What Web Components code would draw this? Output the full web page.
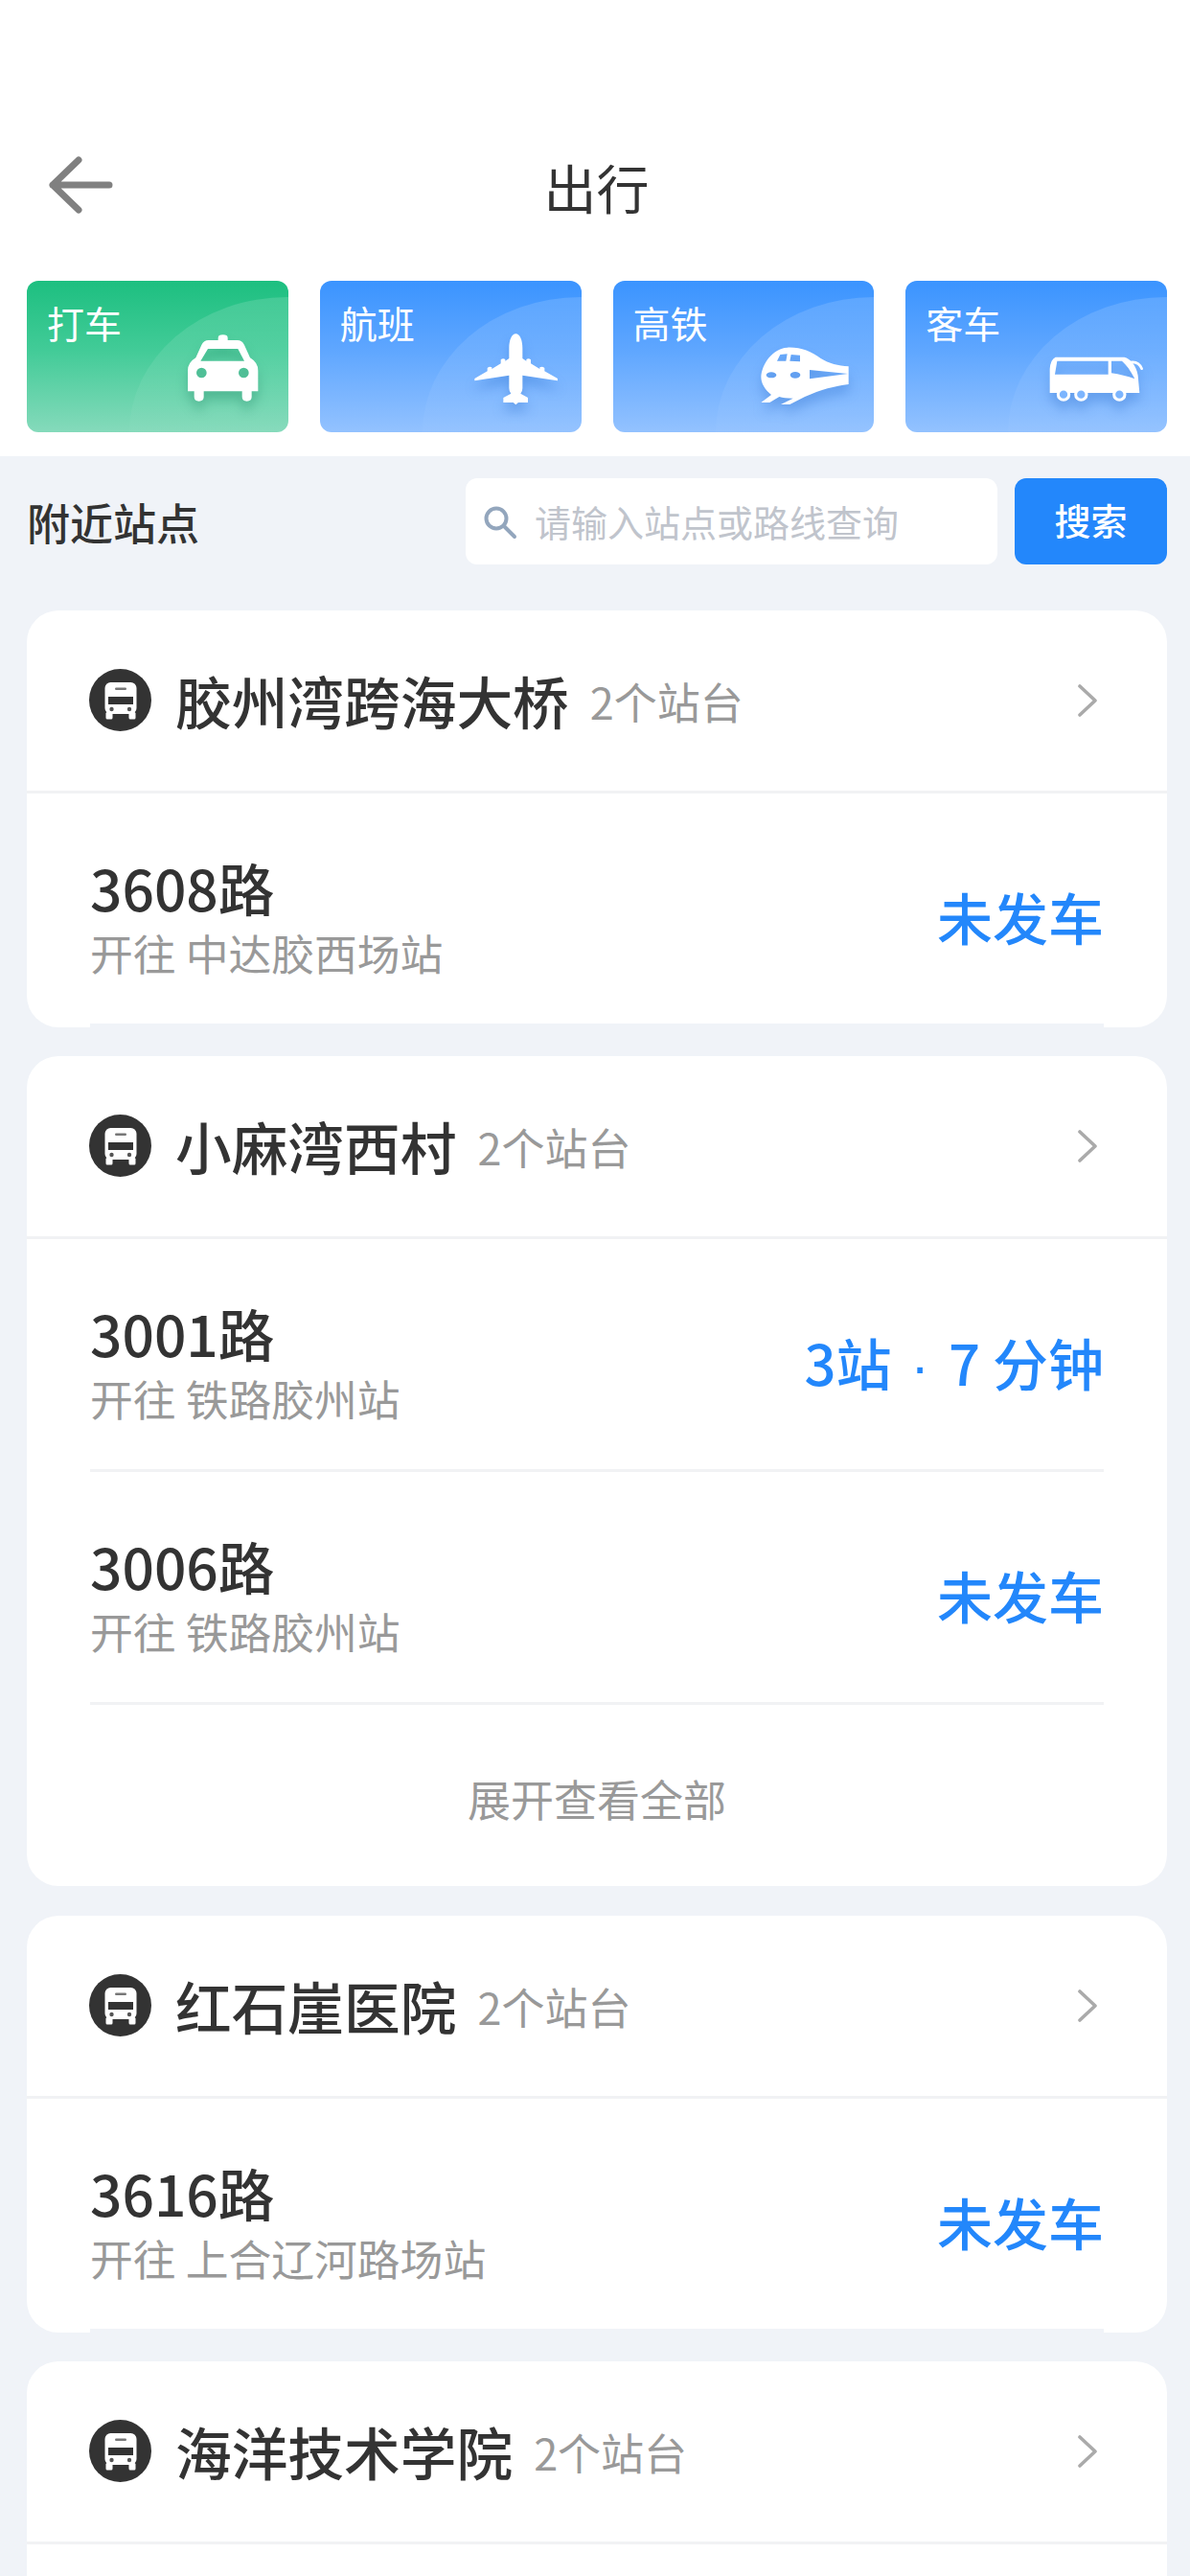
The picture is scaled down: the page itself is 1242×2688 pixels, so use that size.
<!DOCTYPE html>
<html lang="zh-CN">
<head>
<meta charset="utf-8">
<title>出行</title>
<style>
  html, body { margin: 0; padding: 0; }
  body { width: 1242px; height: 2688px; overflow: hidden; background: #f0f3f8;
    font-family: "Noto Sans CJK SC", "Noto Sans", sans-serif; color: #333; }
  travel-page { display: block; }
</style>
</head>
<body>
<travel-page>
  <nav-bar slot="head">出行</nav-bar>
  <mode-tile slot="modes" tone="green" label="打车" style="--ir:15px;--ib:16px">
    <svg width="105" height="95" viewBox="0 0 315 285" fill="#fff">
      <path fill-rule="evenodd" d="M140 45V38Q140 28 155 28Q170 28 170 38V45H200Q215 45 222 60L240 100Q265 115 265 140V205H245V222Q245 236 230 236Q215 236 215 222V205H95V222Q95 236 80 236Q65 236 65 222V205H45V140Q45 115 70 100L88 60Q95 45 110 45ZM108 72H202L222 110H85ZM72 147a16 16 0 1 0 32 0a16 16 0 1 0 -32 0ZM204 147a16 16 0 1 0 32 0a16 16 0 1 0 -32 0Z"/>
    </svg>
  </mode-tile>
  <mode-tile slot="modes" label="航班" style="--ir:16px;--ib:16px">
    <svg width="105" height="95" viewBox="0 0 315 285" fill="#fff">
      <path d="M157 25C170 25 178 45 178 70V102L190 110V105Q197 100 204 106V118L232 135V130Q240 126 247 132V142L288 165V172L178 155V195Q178 205 172 212L195 225V240H165L157 247L149 240H118V225L142 212Q136 205 136 195V155L28 172V165L68 142V132Q75 126 82 130V135L110 118V106Q117 100 124 105V110L136 102V70C136 45 144 25 157 25Z"/>
    </svg>
  </mode-tile>
  <mode-tile slot="modes" label="高铁" style="--ir:17px;--ib:16px">
    <svg width="110" height="85" viewBox="0 0 330 255" fill="#fff">
      <path fill-rule="evenodd" d="M110 38C150 36 185 50 215 72C240 88 270 95 302 97V153C260 158 215 170 165 192L118 216H90L128 197C110 197 95 195 85 192L55 210H28L60 186C40 170 28 150 28 130C30 90 65 40 110 38ZM180 108L300 120L180 136ZM88 60L110 58L106 80H78ZM122 60L150 62V82L118 80ZM44 124a16 9 0 1 0 32 0a16 9 0 1 0 -32 0ZM119 124a16 10 0 1 0 32 0a16 10 0 1 0 -32 0Z"/>
    </svg>
  </mode-tile>
  <mode-tile slot="modes" label="客车" style="--ir:18px;--ib:21px">
    <svg width="115" height="70" viewBox="0 0 345 210" fill="#fff">
      <path fill-rule="evenodd" d="M50 38H265C285 42 303 65 308 95L313 150H32V75Q34 45 50 38ZM55 50H215V92H48ZM225 50H258C272 62 285 80 298 106C275 98 250 92 225 88Z"/>
      <path d="M285 54Q310 50 320 74" fill="none" stroke="#fff" stroke-width="8" stroke-linecap="round"/>
      <g fill="#7cb5fe" stroke="#fff" stroke-width="9"><circle cx="75" cy="155" r="17"/><circle cx="130" cy="155" r="17"/><circle cx="250" cy="155" r="17"/></g>
    </svg>
  </mode-tile>

  <search-row slot="search" heading="附近站点" hint="请输入站点或路线查询" action="搜索"></search-row>

  <stop-card slot="cards" name="胶州湾跨海大桥" count="2个站台">
    <line-row last name="3608路" dest="开往 中达胶西场站" status="未发车"></line-row>
  </stop-card>
  <stop-card slot="cards" name="小麻湾西村" count="2个站台">
    <line-row name="3001路" dest="开往 铁路胶州站" status="3站 · 7 分钟"></line-row>
    <line-row name="3006路" dest="开往 铁路胶州站" status="未发车"></line-row>
    <expand-row>展开查看全部</expand-row>
  </stop-card>
  <stop-card slot="cards" name="红石崖医院" count="2个站台" style="margin-top:1px">
    <line-row last name="3616路" dest="开往 上合辽河路场站" status="未发车"></line-row>
  </stop-card>
  <stop-card slot="cards" open name="海洋技术学院" count="2个站台">
    <expand-row style="height:33px;padding:0"></expand-row>
  </stop-card>
</travel-page>

<script>
function define(tag, css, html) {
  customElements.define(tag, class extends HTMLElement {
    constructor() {
      super();
      this.attachShadow({ mode: 'open' });
    }
    connectedCallback() {
      const attr = n => this.getAttribute(n) || '';
      this.shadowRoot.innerHTML = '<style>' + css + '</style>' + html(attr);
    }
  });
}

define('travel-page', `
  :host { display: block; }
  .top { background: #fff; padding-bottom: 25px; }
  .modes { display: grid; grid-template-columns: repeat(4, 1fr); column-gap: 33px; padding: 0 24px 0 28px; }
  .cards { display: flex; flex-direction: column; gap: 30px; padding: 48px 24px 0 28px; }
`, () => `
  <div class="top">
    <slot name="head"></slot>
    <div class="modes"><slot name="modes"></slot></div>
  </div>
  <slot name="search"></slot>
  <div class="cards"><slot name="cards"></slot></div>
`);

define('nav-bar', `
  :host { display: flex; align-items: center; height: 120px; padding: 134px 0 39px 3px; position: relative; justify-content: center;
    font-size: 55px; line-height: 120px; color: #333; }
  svg { position: absolute; left: 48px; top: 160px; }
`, () => `
  <svg width="76" height="66" viewBox="0 0 76 66" fill="none" stroke="#808080" stroke-width="7" stroke-linecap="round" stroke-linejoin="round">
    <path d="M34 7L7 33L34 59M7 33H66"/>
  </svg>
  <slot></slot>
`);

define('mode-tile', `
  :host { display: block; position: relative; height: 158px; border-radius: 12px; overflow: hidden;
    background: linear-gradient(180deg, #3b94ff 0%, #5ea6ff 45%, #93c2ff 100%); color: #fff; }
  :host([tone="green"]) { background: linear-gradient(180deg, #1dbf80 0%, #41cb97 45%, #85dabb 100%); }
  .arc { position: absolute; left: 107px; right: 0; top: 17px; bottom: 0; border-top-left-radius: 165px 141px;
    background: linear-gradient(180deg, rgba(255,255,255,.14), rgba(255,255,255,.02)); }
  .box { position: relative; display: grid; height: 100%; }
  .label { grid-area: 1 / 1; font-size: 39px; line-height: 50px; padding: 18px 0 0 21px; }
  .icon { grid-area: 1 / 1; align-self: end; display: flex; justify-content: flex-end; padding: 0 var(--ir) var(--ib) 0; }
  ::slotted(svg) { display: block; filter: drop-shadow(0 9px 6px rgba(25,95,190,.28)); }
  :host([tone="green"]) ::slotted(svg) { filter: drop-shadow(0 9px 6px rgba(15,120,85,.3)); }
`, a => `
  <div class="arc"></div>
  <div class="box">
    <div class="label">${a('label')}</div>
    <div class="icon"><slot></slot></div>
  </div>
`);

define('search-row', `
  :host { display: flex; align-items: stretch; height: 90px; padding: 23px 24px 0 28px; }
  .head { flex: 1; font-size: 45px; line-height: 92px; font-weight: 500; color: #333; }
  .field { width: 555px; display: flex; align-items: center; background: #fff; border-radius: 12px; gap: 17px; padding-left: 18px; box-sizing: border-box;
    font-size: 38px; color: #c0c4cc; }
  .field svg { display: block; flex: none; margin-top: 2px; }
  .field span { padding-bottom: 2px; }
  .btn { width: 159px; margin-left: 18px; display: flex; align-items: center; justify-content: center; background: #2387fb; border-radius: 12px;
    color: #fff; font-size: 38px; font-weight: 500; padding-bottom: 5px; box-sizing: border-box; }
`, a => `
  <div class="head">${a('heading')}</div>
  <div class="field">
    <svg width="37" height="37" viewBox="0 0 37 37" fill="none" stroke="#93a6bd" stroke-width="4" stroke-linecap="round">
      <circle cx="14" cy="14" r="10.5"/><path d="M22 22L33 33"/>
    </svg>
    <span>${a('hint')}</span>
  </div>
  <div class="btn">${a('action')}</div>
`);

define('stop-card', `
  :host { display: block; background: #fff; border-radius: 33px; overflow: hidden; }
  :host([open]) { border-radius: 33px 33px 0 0; }
  .top { display: flex; align-items: center; height: 188px; padding: 0 73px 0 65px; border-bottom: 3px solid #f1f2f4; box-sizing: content-box; }
  .top svg.badge { display: block; flex: none; margin-right: 25px; margin-top: -1px; }
  .name { font-size: 58.7px; line-height: 80px; font-weight: 500; color: #333; white-space: nowrap; }
  .count { font-size: 45px; line-height: 80px; color: #999; margin-left: 22px; white-space: nowrap; padding-top: 2px; }
  .chev { display: block; margin-left: auto; flex: none; margin-top: 0; }
`, a => `
  <div class="top">
    <svg class="badge" width="65" height="65" viewBox="0 0 65 65">
      <circle cx="32.5" cy="32.5" r="32.5" fill="#333"/>
      <rect x="16.5" y="14" width="33" height="33" rx="6" fill="#fff"/>
      <rect x="17.5" y="45" width="7" height="7.5" rx="1.5" fill="#fff"/>
      <rect x="41.5" y="45" width="7" height="7.5" rx="1.5" fill="#fff"/>
      <rect x="20" y="29" width="26" height="8" fill="#333"/>
      <rect x="27" y="19.5" width="12" height="2.4" rx="1.2" fill="#777"/>
      <circle cx="23.5" cy="42" r="2.2" fill="#555"/><circle cx="42" cy="42" r="2.2" fill="#555"/>
    </svg>
    <span class="name">${a('name')}</span>
    <span class="count">${a('count')}</span>
    <svg class="chev" width="20" height="34" viewBox="0 0 20 34" fill="none" stroke="#aaa" stroke-width="3.6" stroke-linecap="round" stroke-linejoin="round">
      <path d="M2 2L18 17L2 32"/>
    </svg>
  </div>
  <slot></slot>
`);

define('line-row', `
  :host { display: flex; justify-content: space-between; height: 240px; box-sizing: content-box; margin: 0 66px; border-bottom: 3px solid #f1f2f4; }
  :host([last]) { border-bottom: 4px solid #f0f3f8; }
  .name { font-size: 58.7px; line-height: 68px; color: #333; font-weight: 500; padding-top: 64px; }
  .dest { font-size: 44.8px; line-height: 68px; color: #999; white-space: pre; }
  .status { font-size: 58px; line-height: 80px; color: #2387fb; font-weight: 500; padding-top: 88px; white-space: pre; }
  .dot { font-family: "Liberation Sans", sans-serif; margin: 0 7px; }
`, a => `
  <div>
    <div class="name">${a('name')}</div>
    <div class="dest">${a('dest')}</div>
  </div>
  <div class="status">${a('status').split('·').join('<span class="dot">·</span>')}</div>
`);

define('expand-row', `
  :host { display: flex; align-items: center; justify-content: center; height: 189px; padding-top: 6px; box-sizing: border-box; font-size: 45px; color: #999; }
`, () => `<slot></slot>`);
</script>
</body>
</html>
